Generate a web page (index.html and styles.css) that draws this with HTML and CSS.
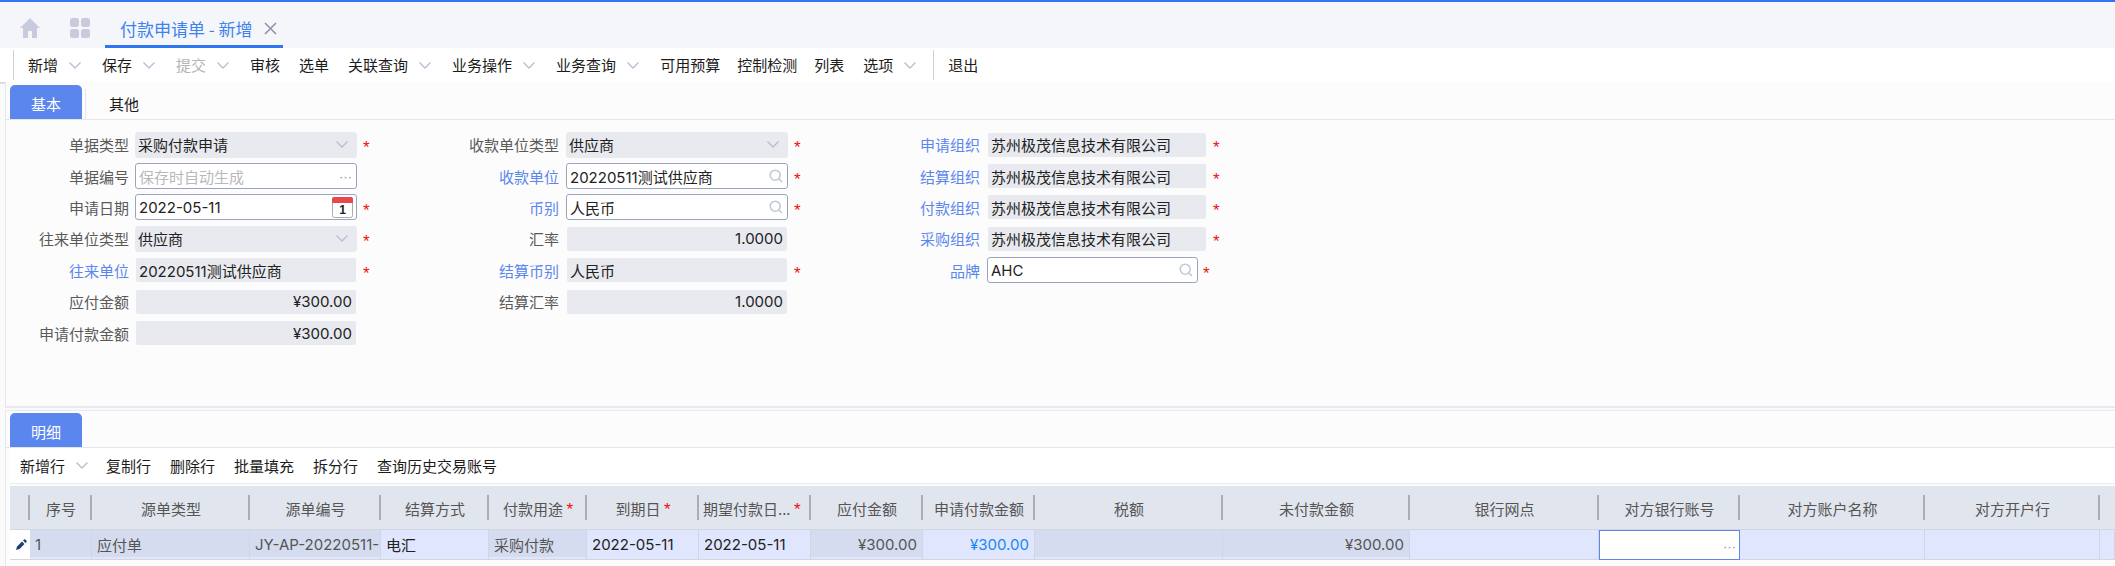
FILE: index.html
```html
<!DOCTYPE html>
<html lang="zh-CN">
<head>
<meta charset="UTF-8">
<title>付款申请单 - 新增</title>
<link rel="stylesheet" href="styles.css">
</head>
<body>

<div class="top-bar">
    <svg class="top-icon" width="20" height="20" viewBox="0 0 20 20"><path d="M10 0 L20 10 L17 10 L17 20 L12 20 L12 13 L8 13 L8 20 L3 20 L3 10 L0 10 Z" fill="#c8cbdd"/></svg>
    <svg class="top-icon grid-icon" width="20" height="20" viewBox="0 0 20 20"><rect x="0" y="0" width="9" height="9" rx="2.5" fill="#c8cbdd"/><rect x="11" y="0" width="9" height="9" rx="2.5" fill="#c8cbdd"/><rect x="0" y="11" width="9" height="9" rx="2.5" fill="#c8cbdd"/><rect x="11" y="11" width="9" height="9" rx="2.5" fill="#c8cbdd"/></svg>
    <div class="page-tab">
        <span>付款申请单 - 新增</span>
        <svg width="13" height="13" viewBox="0 0 13 13"><path d="M1 1 L12 12 M12 1 L1 12" stroke="#8f97ad" stroke-width="1.7" fill="none"/></svg>
    </div>
</div>

<div class="toolbar">
    <i class="tool-sep"></i>
    <span class="tool">新增<svg class="chev" viewBox="0 0 12 7"><path d="M0.5 0.5 L6 6 L11.5 0.5" /></svg></span>
    <span class="tool">保存<svg class="chev" viewBox="0 0 12 7"><path d="M0.5 0.5 L6 6 L11.5 0.5" /></svg></span>
    <span class="tool disabled">提交<svg class="chev" viewBox="0 0 12 7"><path d="M0.5 0.5 L6 6 L11.5 0.5" /></svg></span>
    <span class="tool">审核</span>
    <span class="tool">选单</span>
    <span class="tool">关联查询<svg class="chev" viewBox="0 0 12 7"><path d="M0.5 0.5 L6 6 L11.5 0.5" /></svg></span>
    <span class="tool">业务操作<svg class="chev" viewBox="0 0 12 7"><path d="M0.5 0.5 L6 6 L11.5 0.5" /></svg></span>
    <span class="tool">业务查询<svg class="chev" viewBox="0 0 12 7"><path d="M0.5 0.5 L6 6 L11.5 0.5" /></svg></span>
    <span class="tool">可用预算</span>
    <span class="tool nudge">控制检测</span>
    <span class="tool nudge">列表</span>
    <span class="tool">选项<svg class="chev" viewBox="0 0 12 7"><path d="M0.5 0.5 L6 6 L11.5 0.5" /></svg></span>
    <i class="tool-sep end"></i>
    <span class="tool">退出</span>
</div>

<div class="panel form-panel">
    <div class="tabs">
        <div class="tab active">基本</div>
        <i class="tab-sep"></i>
        <div class="tab">其他</div>
    </div>
    <div class="form">
        <div class="form-col col-one">
            <div class="row"><label>单据类型</label><div class="field select"><span>采购付款申请</span><svg class="chev" viewBox="0 0 12 7"><path d="M0.5 0.5 L6 6 L11.5 0.5" /></svg></div><b class="star">*</b></div>
            <div class="row"><label>单据编号</label><div class="field edit"><span class="holder">保存时自动生成</span><span class="dots">···</span></div></div>
            <div class="row"><label>申请日期</label><div class="field edit"><span>2022-05-11</span>
                <svg class="cal" width="21" height="21" viewBox="0 0 21 21"><rect x="0.5" y="0.5" width="20" height="20" rx="2" fill="#fff" stroke="#a9adb5"/><path d="M0 2 a2 2 0 0 1 2 -2 h17 a2 2 0 0 1 2 2 v4 h-21 Z" fill="#e8474c"/><text x="10.5" y="17" text-anchor="middle" class="cal-num">1</text></svg>
            </div><b class="star">*</b></div>
            <div class="row"><label>往来单位类型</label><div class="field select"><span>供应商</span><svg class="chev" viewBox="0 0 12 7"><path d="M0.5 0.5 L6 6 L11.5 0.5" /></svg></div><b class="star">*</b></div>
            <div class="row"><label class="link">往来单位</label><div class="field readonly"><span>20220511测试供应商</span></div><b class="star">*</b></div>
            <div class="row"><label>应付金额</label><div class="field readonly right"><span>¥300.00</span></div></div>
            <div class="row"><label>申请付款金额</label><div class="field readonly right"><span>¥300.00</span></div></div>
        </div>
        <div class="form-col col-two">
            <div class="row"><label>收款单位类型</label><div class="field select"><span>供应商</span><svg class="chev" viewBox="0 0 12 7"><path d="M0.5 0.5 L6 6 L11.5 0.5" /></svg></div><b class="star">*</b></div>
            <div class="row"><label class="link">收款单位</label><div class="field edit"><span>20220511测试供应商</span><svg class="search" width="14" height="14" viewBox="0 0 14 14"><circle cx="6.2" cy="6.2" r="5" /><path d="M9.5 9.5 L13 13" /></svg></div><b class="star">*</b></div>
            <div class="row"><label class="link">币别</label><div class="field edit"><span>人民币</span><svg class="search" width="14" height="14" viewBox="0 0 14 14"><circle cx="6.2" cy="6.2" r="5" /><path d="M9.5 9.5 L13 13" /></svg></div><b class="star">*</b></div>
            <div class="row"><label>汇率</label><div class="field readonly right"><span>1.0000</span></div></div>
            <div class="row"><label class="link">结算币别</label><div class="field readonly"><span>人民币</span></div><b class="star">*</b></div>
            <div class="row"><label>结算汇率</label><div class="field readonly right"><span>1.0000</span></div></div>
        </div>
        <div class="form-col col-three">
            <div class="row"><label class="link">申请组织</label><div class="field readonly"><span>苏州极茂信息技术有限公司</span></div><b class="star">*</b></div>
            <div class="row"><label class="link">结算组织</label><div class="field readonly"><span>苏州极茂信息技术有限公司</span></div><b class="star">*</b></div>
            <div class="row"><label class="link">付款组织</label><div class="field readonly"><span>苏州极茂信息技术有限公司</span></div><b class="star">*</b></div>
            <div class="row"><label class="link">采购组织</label><div class="field readonly"><span>苏州极茂信息技术有限公司</span></div><b class="star">*</b></div>
            <div class="row"><label class="link">品牌</label><div class="field edit brand"><span>AHC</span><svg class="search" width="14" height="14" viewBox="0 0 14 14"><circle cx="6.2" cy="6.2" r="5" /><path d="M9.5 9.5 L13 13" /></svg></div><b class="star">*</b></div>
        </div>
    </div>
</div>

<div class="panel detail-panel">
    <div class="tabs">
        <div class="tab active">明细</div>
    </div>
    <div class="detail-tools">
        <span class="tool">新增行<svg class="chev" viewBox="0 0 12 7"><path d="M0.5 0.5 L6 6 L11.5 0.5" /></svg></span>
        <span class="tool">复制行</span>
        <span class="tool">删除行</span>
        <span class="tool">批量填充</span>
        <span class="tool">拆分行</span>
        <span class="tool">查询历史交易账号</span>
    </div>
    <table class="grid">
        <colgroup>
            <col class="c20"><col class="c62"><col class="c158"><col class="c131"><col class="c108"><col class="c98"><col class="c112"><col class="c112"><col class="c112"><col class="c112"><col class="c188"><col class="c187"><col class="c189"><col class="c141"><col class="c185"><col class="c175"><col>
        </colgroup>
        <thead>
            <tr>
                <th></th>
                <th>序号</th>
                <th>源单类型</th>
                <th>源单编号</th>
                <th>结算方式</th>
                <th>付款用途 <b class="star">*</b></th>
                <th>到期日 <b class="star">*</b></th>
                <th class="tight">期望付款日... <b class="star">*</b></th>
                <th>应付金额</th>
                <th>申请付款金额</th>
                <th>税额</th>
                <th>未付款金额</th>
                <th>银行网点</th>
                <th>对方银行账号</th>
                <th>对方账户名称</th>
                <th>对方开户行</th>
                <th class="no-sep"></th>
            </tr>
        </thead>
        <tbody>
            <tr>
                <td class="marker"><svg width="11" height="11" viewBox="0 0 11 11"><path d="M0 11 L1 7.5 L6 2.5 L8.5 5 L3.5 10 Z M7 1.5 L8 0.5 Q8.7 0 9.3 0.5 L10.5 1.7 Q11 2.3 10.5 3 L9.5 4 Z" fill="#1f3f77"/></svg></td>
                <td class="ro">1</td>
                <td class="ro">应付单</td>
                <td class="ro clip">JY-AP-20220511-</td>
                <td>电汇</td>
                <td class="ro">采购付款</td>
                <td>2022-05-11</td>
                <td>2022-05-11</td>
                <td class="ro num">¥300.00</td>
                <td class="num blue">¥300.00</td>
                <td class="ro"></td>
                <td class="ro num">¥300.00</td>
                <td></td>
                <td class="active-cell"><span class="dots">···</span></td>
                <td></td>
                <td></td>
                <td></td>
            </tr>
        </tbody>
    </table>
</div>

</body>
</html>
```

FILE: styles.css
```css
* {
    box-sizing: border-box;
}
body {
    margin: 0;
    height: 566px;
    overflow: hidden;
    background-color: #fafafa;
    font-family: "Noto Sans CJK SC", "Liberation Sans", sans-serif;
    font-size: 15px;
    color: #222;
}
.chev {
    width: 12px;
    height: 7px;
    fill: none;
    stroke: #b9bfd2;
    stroke-width: 1.4;
}

/* top tabs */
.top-bar {
    height: 48px;
    background-color: #f5f6fa;
    border-top: 2px solid #2f76f0;
    display: flex;
    align-items: flex-start;
    padding-left: 20px;
}
.top-icon {
    margin-top: 16px;
}
.grid-icon {
    margin-left: 30px;
}
.page-tab {
    margin-left: 15px;
    height: 46px;
    width: 178px;
    border-bottom: 3px solid #2f76f0;
    padding-left: 15px;
    display: flex;
    align-items: center;
    gap: 11px;
    padding-top: 9px;
    color: #3d82f0;
    font-size: 17px;
    white-space: nowrap;
}

/* main toolbar */
.toolbar {
    height: 35px;
    background-color: #fff;
    border-bottom: 1px solid #d4d7df;
    box-shadow: 0 1px 1px #e2e4ea;
    display: flex;
    align-items: center;
    gap: 19px;
    padding-left: 13px;
}
.tool {
    display: flex;
    align-items: center;
    white-space: nowrap;
    color: #1c1c1c;
    line-height: 20px;
}
.tool .chev {
    margin-left: 11px;
    margin-right: 2px;
}
.tool.disabled {
    color: #b4b4b4;
}
.tool.nudge {
    margin-left: -2px;
}
.tool-sep {
    width: 1px;
    height: 30px;
    background-color: #c9d0e0;
    margin-right: -5px;
}
.tool-sep.end {
    margin-left: -4px;
    margin-right: -5px;
}

/* panels */
.panel {
    margin-left: 5px;
    background-color: #fcfcfd;
    border-left: 1px solid #e4e7f0;
}
.form-panel {
    height: 326px;
    border-bottom: 2px solid #e8eaf1;
    padding-top: 3px;
    margin-top: -1px;
}
.detail-panel {
    margin-top: 2px;
    border-top: 1px solid #e8eaf1;
    padding-top: 2px;
    height: 156px;
}
.tabs {
    height: 35px;
    padding-left: 4px;
    display: flex;
    align-items: flex-end;
    border-bottom: 1px solid #e3e6ee;
}
.tab {
    width: 72px;
    height: 34px;
    line-height: 38px;
    text-align: center;
    color: #1c1c1c;
    border-radius: 5px 5px 0 0;
}
.tab.active {
    background-color: #5b86ee;
    color: #fff;
}
.tab-sep {
    width: 1px;
    height: 30px;
    margin-left: 3px;
    background-color: #e3e6ee;
    margin-right: 2px;
}

/* form */
.form {
    display: flex;
    padding: 9px 0 0 13px;
}
.form-col {
    display: flex;
    flex-direction: column;
}
.row {
    height: 31.4px;
    display: flex;
    align-items: center;
}
.row label {
    text-align: right;
    color: #5a5a5a;
    white-space: nowrap;
}
.row label.link {
    color: #5b86ee;
}
.col-one {
    width: 440px;
}
.col-one label {
    width: 110px;
    margin-right: 6px;
}
.col-two {
    width: 421px;
}
.col-two label {
    width: 100px;
    margin-right: 7px;
}
.col-three label {
    width: 100px;
    margin-right: 7px;
}
.field {
    width: 222px;
    height: 26px;
    display: flex;
    align-items: center;
    justify-content: space-between;
    padding: 0 4px 0 3px;
    border-radius: 3px;
    white-space: nowrap;
    font-family: "Inter", "Noto Sans CJK SC", sans-serif;
    font-size: 15px;
}
.select {
    background-color: #e8eaef;
}
.select .chev {
    margin-right: 5px;
}
.edit {
    background-color: #fff;
    border: 1px solid #9aa5bd;
}
.readonly {
    background-color: #e8eaef;
    background-clip: padding-box;
    border: 1px solid transparent;
}
.right {
    justify-content: flex-end;
}
.col-three .field {
    width: 220px;
}
.col-three .brand {
    width: 211px;
}
.holder {
    color: #b9b9b9;
}
.dots {
    color: #8d8d8d;
    font-family: "Liberation Sans", sans-serif;
    font-size: 13px;
}
.search {
    fill: none;
    stroke: #c3c8d8;
    stroke-width: 1.6;
}
.cal {
    margin-right: -1px;
}
.cal-num {
    font-family: "Liberation Sans", sans-serif;
    font-size: 12px;
    font-weight: bold;
    fill: #222;
}
.star {
    color: #f01010;
    font-family: "Liberation Sans", sans-serif;
    font-weight: normal;
    font-size: 17px;
    line-height: 1;
    margin-left: 6px;
    padding-top: 6px;
}
.col-three .brand + .star {
    margin-left: 5px;
}

/* detail */
.detail-tools {
    height: 36px;
    margin-left: 4px;
    background-color: #fff;
    border-bottom: 1px solid #ececf1;
    display: flex;
    align-items: center;
    gap: 19px;
    padding-left: 10px;
}
.detail-tools .tool .chev {
    margin-right: -1px;
}
.grid {
    margin-top: 2px;
    margin-left: 4px;
    width: 2105px;
    table-layout: fixed;
    border-collapse: separate;
    border-spacing: 0;
}
.c20 { width: 20px; }
.c62 { width: 62px; }
.c158 { width: 158px; }
.c131 { width: 131px; }
.c108 { width: 108px; }
.c98 { width: 98px; }
.c112 { width: 112px; }
.c141 { width: 141px; }
.c175 { width: 175px; }
.c185 { width: 185px; }
.c187 { width: 187px; }
.c188 { width: 188px; }
.c189 { width: 189px; }
.grid th {
    height: 44px;
    background-color: #e1e5ee;
    border-bottom: 1px solid #d3d6de;
    font-weight: normal;
    color: #555;
    white-space: nowrap;
    overflow: hidden;
    padding: 2px 0 0;
    position: relative;
}
.grid th::after {
    content: "";
    position: absolute;
    right: 0;
    top: 9px;
    width: 2px;
    height: 25px;
    background-color: #a9adb5;
}
.grid th.no-sep::after {
    display: none;
}
.grid th .star {
    margin-left: 0;
    padding-top: 0;
}
.grid th.tight {
    text-align: left;
    padding-left: 4px;
}
.grid td {
    height: 30px;
    padding: 0 0 0 5px;
    background-color: #dfe6fd;
    border-right: 1px solid #d0d6e6;
    border-bottom: 1px solid #d3d6de;
    white-space: nowrap;
    overflow: hidden;
    font-family: "Inter", "Noto Sans CJK SC", sans-serif;
    font-size: 15px;
    color: #222;
}
.grid td.ro {
    background: linear-gradient(#d6dcef 27px, #dfe6fd 27px);
    color: #555;
}
.grid td.num {
    text-align: right;
    padding-right: 5px;
}
.grid td.blue {
    color: #1b86f2;
}
.grid td.marker {
    padding: 0 0 0 6px;
    background-color: #fff;
    border-right: none;
    line-height: 1;
}
.grid td.active-cell {
    background-color: #fff;
    border: 1px solid #5b86ee;
    text-align: right;
    padding: 0 3px 0 0;
}
```
